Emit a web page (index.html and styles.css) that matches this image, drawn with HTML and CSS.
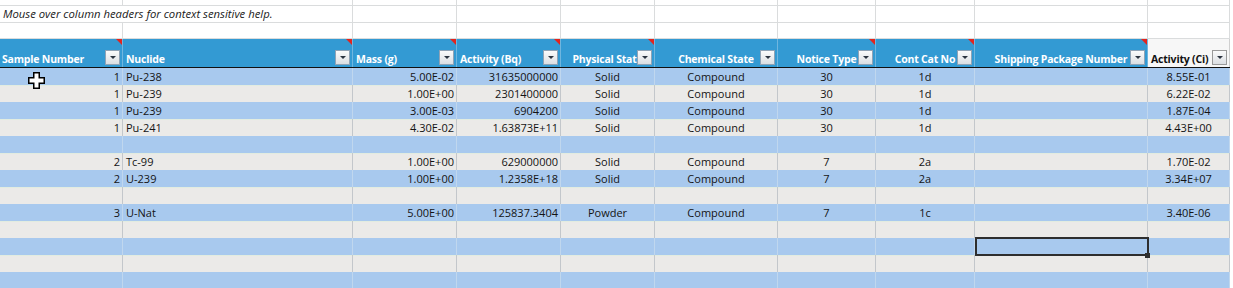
FILE: index.html
```html
<!DOCTYPE html>
<html>
<head>
<meta charset="utf-8">
<link rel="stylesheet" href="styles.css">
</head>
<body>
<div class="sheet">
  <div class="row top r1">
    <div class="cell"></div><div class="cell"></div><div class="cell"></div><div class="cell"></div><div class="cell"></div><div class="cell"></div><div class="cell"></div><div class="cell"></div><div class="cell"></div><div class="cell"></div>
  </div>
  <div class="row top r2">
    <div class="cell note">Mouse over column headers for context sensitive help.</div><div class="cell"></div><div class="cell"></div><div class="cell"></div><div class="cell"></div><div class="cell"></div><div class="cell"></div><div class="cell"></div><div class="cell"></div>
  </div>
  <div class="row top r3">
    <div class="cell"></div><div class="cell"></div><div class="cell"></div><div class="cell"></div><div class="cell"></div><div class="cell"></div><div class="cell"></div><div class="cell"></div><div class="cell"></div><div class="cell"></div>
  </div>

  <div class="row head">
    <div class="hc cm"><span>Sample Number</span><i class="dd"></i></div>
    <div class="hc cm"><span>Nuclide</span><i class="dd"></i></div>
    <div class="hc cm"><span>Mass (g)</span><i class="dd"></i></div>
    <div class="hc cm"><span>Activity (Bq)</span><i class="dd"></i></div>
    <div class="hc cm ctr"><span>Physical State</span><i class="dd"></i></div>
    <div class="hc ctr"><span>Chemical State</span><i class="dd"></i></div>
    <div class="hc cm ctr"><span>Notice Type</span><i class="dd"></i></div>
    <div class="hc cm ctr"><span>Cont Cat No</span><i class="dd"></i></div>
    <div class="hc cm ctr"><span>Shipping Package Number</span><i class="dd"></i></div>
    <div class="hc plain"><span>Activity (Ci)</span><i class="dd"></i></div>
  </div>

  <div class="row data blue"><div class="cell r">1</div><div class="cell l">Pu-238</div><div class="cell r">5.00E-02</div><div class="cell r">31635000000</div><div class="cell c">Solid</div><div class="cell c">Compound</div><div class="cell c">30</div><div class="cell c">1d</div><div class="cell"></div><div class="cell c">8.55E-01</div></div>
  <div class="row data gray"><div class="cell r">1</div><div class="cell l">Pu-239</div><div class="cell r">1.00E+00</div><div class="cell r">2301400000</div><div class="cell c">Solid</div><div class="cell c">Compound</div><div class="cell c">30</div><div class="cell c">1d</div><div class="cell"></div><div class="cell c">6.22E-02</div></div>
  <div class="row data blue"><div class="cell r">1</div><div class="cell l">Pu-239</div><div class="cell r">3.00E-03</div><div class="cell r">6904200</div><div class="cell c">Solid</div><div class="cell c">Compound</div><div class="cell c">30</div><div class="cell c">1d</div><div class="cell"></div><div class="cell c">1.87E-04</div></div>
  <div class="row data gray"><div class="cell r">1</div><div class="cell l">Pu-241</div><div class="cell r">4.30E-02</div><div class="cell r">1.63873E+11</div><div class="cell c">Solid</div><div class="cell c">Compound</div><div class="cell c">30</div><div class="cell c">1d</div><div class="cell"></div><div class="cell c">4.43E+00</div></div>
  <div class="row data blue"><div class="cell"></div><div class="cell"></div><div class="cell"></div><div class="cell"></div><div class="cell"></div><div class="cell"></div><div class="cell"></div><div class="cell"></div><div class="cell"></div><div class="cell"></div></div>
  <div class="row data gray"><div class="cell r">2</div><div class="cell l">Tc-99</div><div class="cell r">1.00E+00</div><div class="cell r">629000000</div><div class="cell c">Solid</div><div class="cell c">Compound</div><div class="cell c">7</div><div class="cell c">2a</div><div class="cell"></div><div class="cell c">1.70E-02</div></div>
  <div class="row data blue"><div class="cell r">2</div><div class="cell l">U-239</div><div class="cell r">1.00E+00</div><div class="cell r">1.2358E+18</div><div class="cell c">Solid</div><div class="cell c">Compound</div><div class="cell c">7</div><div class="cell c">2a</div><div class="cell"></div><div class="cell c">3.34E+07</div></div>
  <div class="row data gray"><div class="cell"></div><div class="cell"></div><div class="cell"></div><div class="cell"></div><div class="cell"></div><div class="cell"></div><div class="cell"></div><div class="cell"></div><div class="cell"></div><div class="cell"></div></div>
  <div class="row data blue"><div class="cell r">3</div><div class="cell l">U-Nat</div><div class="cell r">5.00E+00</div><div class="cell r">125837.3404</div><div class="cell c">Powder</div><div class="cell c">Compound</div><div class="cell c">7</div><div class="cell c">1c</div><div class="cell"></div><div class="cell c">3.40E-06</div></div>
  <div class="row data gray"><div class="cell"></div><div class="cell"></div><div class="cell"></div><div class="cell"></div><div class="cell"></div><div class="cell"></div><div class="cell"></div><div class="cell"></div><div class="cell"></div><div class="cell"></div></div>
  <div class="row data blue"><div class="cell"></div><div class="cell"></div><div class="cell"></div><div class="cell"></div><div class="cell"></div><div class="cell"></div><div class="cell"></div><div class="cell"></div><div class="cell sel"></div><div class="cell"></div></div>
  <div class="row data gray"><div class="cell"></div><div class="cell"></div><div class="cell"></div><div class="cell"></div><div class="cell"></div><div class="cell"></div><div class="cell"></div><div class="cell"></div><div class="cell"></div><div class="cell"></div></div>
  <div class="row data blue"><div class="cell"></div><div class="cell"></div><div class="cell"></div><div class="cell"></div><div class="cell"></div><div class="cell"></div><div class="cell"></div><div class="cell"></div><div class="cell"></div><div class="cell"></div></div>

  <svg class="cursor" width="17" height="17" viewBox="0 0 17 17">
    <path d="M5.75 0.75 H11.25 V5.75 H16.25 V11.25 H11.25 V16.25 H5.75 V11.25 H0.75 V5.75 H5.75 Z" fill="#fff" stroke="#000" stroke-width="1.5"/>
  </svg>
</div>
</body>
</html>
```
FILE: styles.css
```css
body {
  margin: 0;
  background: #fff;
  font-family: "Open Sans", "Liberation Sans", sans-serif;
  color: #141414;
}

.sheet {
  position: relative;
  width: 1233px;
  height: 288px;
  overflow: hidden;
}

.row {
  display: grid;
  grid-template-columns: 123px 230px 104px 104px 94px 123px 98px 99px 173px 82px;
}

.cell {
  box-sizing: border-box;
  border-right: 1px solid #c7cbce;
  overflow: hidden;
  white-space: nowrap;
}

/* top worksheet rows */
.top .cell {
  border-right-color: #dadcdd;
  border-bottom: 1px solid #dadcdd;
}
.r1 { height: 6px; }
.r2 { height: 17px; }
.r3 { height: 16px; }

.note {
  grid-column: span 2;
  font-style: italic;
  font-size: 11.3px;
  line-height: 16px;
  padding-left: 3px;
  color: #1a1a1a;
}

/* header */
.head {
  box-sizing: border-box;
  height: 29px;
  border-bottom: 1px solid #111;
  width: 1230px;
}

.hc {
  position: relative;
  box-sizing: border-box;
  background: #339ad3;
  border-right: 1px solid #6fb6df;
  display: flex;
  align-items: flex-end;
  padding: 0 3px 1px 3px;
  color: #fff;
  font-weight: 700;
  font-size: 10.5px;
  letter-spacing: -0.2px;
  line-height: 14px;
  white-space: nowrap;
  overflow: hidden;
}
.hc:first-child { padding-left: 2px; }
.hc.ctr { justify-content: center; }

.hc.plain {
  background: #f7f7f7;
  color: #111;
  border-right: 1px solid #d0d0d0;
}

.dd {
  position: absolute;
  right: 2px;
  bottom: 2px;
  width: 15px;
  height: 15px;
  box-sizing: border-box;
  border: 1px solid #8fa3b6;
  background: linear-gradient(#fbfbfb, #dcdfe3);
}
.dd::after {
  content: "";
  position: absolute;
  left: 4px;
  top: 5px;
  border-left: 3px solid transparent;
  border-right: 3px solid transparent;
  border-top: 3px solid #2c3440;
}
.plain .dd { border-color: #9a9a9a; }

.cm::before {
  content: "";
  position: absolute;
  top: 0;
  right: 0;
  border-left: 6px solid transparent;
  border-top: 6px solid #e3241d;
  z-index: 2;
}

/* data */
.data {
  width: 1230px;
  height: 17px;
}
.data .cell {
  height: 17px;
  line-height: 18px;
  font-size: 11px;
  padding: 0 3px;
}
.blue { background: #a8c9ee; }
.blue .cell { border-right-color: #c0d7ee; }
.gray { background: #ebeae8; box-shadow: inset 0 1px 0 #e2ece0; }
.gray .cell { border-right-color: #c3c7cb; }

.data .r { text-align: right; padding-right: 2px; }
.data .l { text-align: left; }
.data .c { text-align: center; }

.sel {
  position: relative;
  overflow: visible !important;
}
.sel::after {
  content: "";
  position: absolute;
  left: 0;
  top: -1px;
  right: -2px;
  bottom: -1px;
  border: 2px solid #2e2e2e;
  z-index: 3;
}
.sel::before {
  content: "";
  position: absolute;
  right: -3px;
  bottom: -3px;
  width: 5px;
  height: 5px;
  background: #2e2e2e;
  z-index: 4;
}

.cursor {
  position: absolute;
  left: 28px;
  top: 72px;
}
```
